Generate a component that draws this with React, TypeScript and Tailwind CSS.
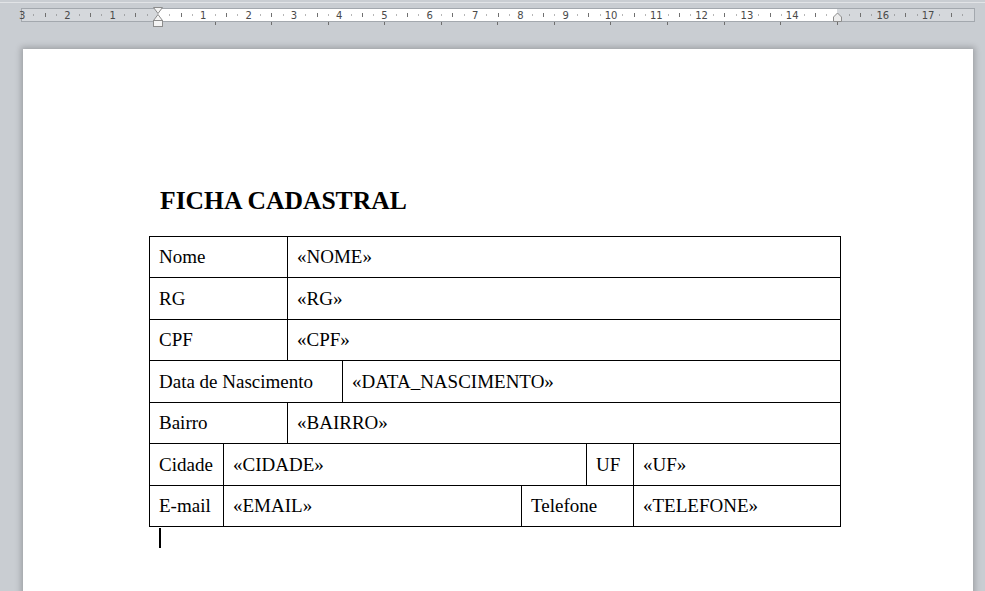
const CM = 45.3;
const ORIGIN = 158;
const RIGHT = 837;

function Ruler() {
  const nums: { x: number; n: number }[] = [];
  for (let n = 1; n <= 3; n++) nums.push({ x: ORIGIN - n * CM, n });
  for (let n = 1; n <= 17; n++) if (n !== 15) nums.push({ x: ORIGIN + n * CM, n });

  const marks: { x: number; half: boolean }[] = [];
  for (let q = -12; q <= 72; q++) {
    if (q % 4 === 0) continue;
    const x = ORIGIN + (q * CM) / 4;
    if (x < 23 || x > 972) continue;
    if (Math.abs(x - ORIGIN) < 5 || Math.abs(x - RIGHT) < 5) continue;
    marks.push({ x, half: Math.abs(q % 4) === 2 });
  }

  const tabs: number[] = [];
  for (let k = 1; k <= 12; k++) tabs.push(ORIGIN + k * 56.55);

  return (
    <svg width="985" height="30" className="block">
      <line x1="0" y1="2.5" x2="985" y2="2.5" stroke="#e2e4e7" />
      <rect x="21.5" y="8.5" width="953" height="13" fill="#d5d8dc" stroke="#a3a8ae" />
      <rect x={ORIGIN} y="9" width={RIGHT - ORIGIN} height="12" fill="#ffffff" />
      {marks.map((m, i) =>
        m.half ? (
          <rect key={i} x={Math.round(m.x)} y="13" width="1" height="4" fill="#707070" />
        ) : (
          <rect key={i} x={Math.round(m.x)} y="14.5" width="1" height="1" fill="#707070" />
        )
      )}
      {nums.map((d, i) => (
        <text
          key={i}
          x={d.x}
          y="18.5"
          textAnchor="middle"
          fontSize="10"
          fontFamily="'DejaVu Sans', sans-serif"
          fill="#4a4a4a"
        >
          {d.n}
        </text>
      ))}
      {tabs.map((x, i) => (
        <rect key={i} x={Math.round(x)} y="22" width="1" height="3" fill="#6e6e6e" />
      ))}
      {/* recuos à esquerda */}
      <path d="M153.5 7.5 H162.5 L158 13.5 Z" fill="#f4f4f4" stroke="#8c8c8c" />
      <path d="M158 14.5 L162.5 20.5 H153.5 Z" fill="#f4f4f4" stroke="#8c8c8c" />
      <rect x="153.5" y="20.5" width="9" height="6" fill="#f4f4f4" stroke="#8c8c8c" />
      {/* recuo à direita */}
      <path d="M833.5 21.5 V17 L837.5 13 L841.5 17 V21.5 Z" fill="#ececec" stroke="#8c8c8c" />
    </svg>
  );
}

type Cell = { w?: number; text: string };

const rows: Cell[][] = [
  [{ w: 138, text: 'Nome' }, { text: '«NOME»' }],
  [{ w: 138, text: 'RG' }, { text: '«RG»' }],
  [{ w: 138, text: 'CPF' }, { text: '«CPF»' }],
  [{ w: 193, text: 'Data de Nascimento' }, { text: '«DATA_NASCIMENTO»' }],
  [{ w: 138, text: 'Bairro' }, { text: '«BAIRRO»' }],
  [{ w: 74, text: 'Cidade' }, { w: 363, text: '«CIDADE»' }, { w: 47, text: 'UF' }, { text: '«UF»' }],
  [{ w: 74, text: 'E-mail' }, { w: 298, text: '«EMAIL»' }, { w: 112, text: 'Telefone' }, { text: '«TELEFONE»' }],
];

export default function App() {
  return (
    <div className="w-[985px] h-[591px] overflow-hidden bg-[#c9cdd2]">
      <div className="h-[49px]">
        <Ruler />
      </div>
      <div className="ml-[23px] w-[950px] h-[560px] bg-white shadow-[0_0_6px_2px_rgba(0,0,0,0.22)] font-['Liberation_Serif','Times_New_Roman',serif] text-black">
        <div className="pt-[137px] pl-[137px]">
          <h1 className="text-[25.6px] leading-[29px] font-bold">FICHA CADASTRAL</h1>
        </div>
        <div className="ml-[126px] mt-[21px] w-[692px] border-l border-r border-b border-black">
          {rows.map((row, i) => (
            <div key={i} className={`flex border-t border-black ${i % 2 === 0 ? 'h-[41px]' : 'h-[42px]'}`}>
              {row.map((c, j) => {
                const last = j === row.length - 1;
                return (
                  <div
                    key={j}
                    style={c.w ? { width: c.w } : undefined}
                    className={`flex items-center pl-[9px] text-[19px] leading-[22px] ${last ? 'flex-1' : 'shrink-0 border-r border-black'}`}
                  >
                    {c.text}
                  </div>
                );
              })}
            </div>
          ))}
        </div>
        <div className="ml-[136px] mt-[1px] w-[2px] h-[20px] bg-black" />
      </div>
    </div>
  );
}
